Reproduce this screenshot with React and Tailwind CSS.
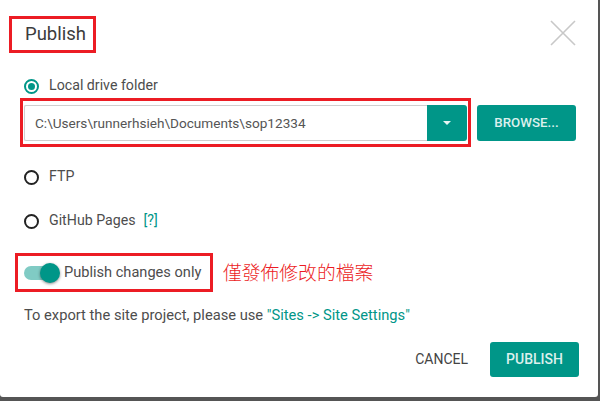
import React from "react";

function Radio({ checked, label, children }) {
  return (
    <div className="flex items-center h-[20px] pl-[24px]">
      {checked ? (
        <span className="w-[15px] h-[15px] rounded-full border-2 border-[#009688] flex items-center justify-center">
          <span className="w-[7px] h-[7px] rounded-full bg-[#009688]" />
        </span>
      ) : (
        <span className="w-[15px] h-[15px] rounded-full border-2 border-[#222]" />
      )}
      <span className="ml-[10px] text-[14.2px] text-[#4d4d4d]">{label}</span>
      {children}
    </div>
  );
}

export default function App() {
  return (
    <div className="w-[600px] h-[401px] bg-[#555] font-['Roboto',sans-serif] overflow-hidden">
      <div className="w-[598px] h-[397px] bg-white rounded-b-[3px] flex flex-col">
        {/* header */}
        <div className="flex justify-between items-start mt-[16px] pl-[9px] pr-[22px]">
          <div className="h-[37px] border-[3px] border-[#ec1c24] pl-[13px] pr-[7px] flex items-center text-[18.5px] text-[#3c3c3c]">
            Publish
          </div>
          <svg width="26" height="26" viewBox="0 0 26 26" className="mt-[4px]">
            <path d="M1 1 L25 25 M25 1 L1 25" stroke="#c8c8c8" strokeWidth="1.6" fill="none" />
          </svg>
        </div>

        <div className="mt-[23px]">
          <Radio checked label="Local drive folder" />
        </div>

        {/* folder input */}
        <div className="flex items-center ml-[20px] mt-[2px]">
          <div className="h-[49px] w-[451px] border-[3px] border-[#ec1c24] px-[1px] pt-[4px] pb-[3px] flex">
            <div className="flex-1 h-[36px] border border-[#cfcfcf] border-r-0 rounded-l-[2px] flex items-center pl-[10px] text-[13.6px] text-[#555]">
              C:\Users\runnerhsieh\Documents\sop12334
            </div>
            <div className="w-[40px] h-[36px] bg-[#009688] rounded-r-[3px] flex items-center justify-center">
              <svg width="8" height="4" viewBox="0 0 8 4">
                <path d="M0 0 L8 0 L4 4 Z" fill="#e8f5f3" />
              </svg>
            </div>
          </div>
          <button className="ml-[6px] h-[36px] w-[99px] bg-[#009688] rounded-[3px] text-[13.3px] font-medium text-[#dcf0ed]">
            BROWSE...
          </button>
        </div>

        <div className="mt-[20px]">
          <Radio label="FTP" />
        </div>
        <div className="mt-[24px]">
          <Radio label="GitHub Pages">
            <span className="ml-[8px] text-[14.2px] text-[#009688]">[?]</span>
          </Radio>
        </div>

        {/* toggle */}
        <div className="flex items-center ml-[15px] mt-[22px]">
          <div className="h-[39px] w-[198px] border-[3px] border-[#ec1c24] pl-[6px] flex items-center">
            <div className="relative w-[35px] h-[14px] rounded-full bg-[#80cbc4]">
              <span className="absolute right-[-1px] top-[-3px] w-[20px] h-[20px] rounded-full bg-[#009688] shadow-[0_1px_3px_rgba(0,0,0,0.45)]" />
            </div>
            <span className="ml-[5px] text-[14.6px] text-[#4d4d4d]">Publish changes only</span>
          </div>
          <span className="ml-[10px] text-[18.8px] text-[#ec1c24] font-['Noto_Sans_CJK_TC',sans-serif] font-light leading-none">
            僅發佈修改的檔案
          </span>
        </div>

        <div className="mt-[13px] h-[20px] flex items-center pl-[24px] text-[14.7px] text-[#4d4d4d] whitespace-nowrap">
          To export the site project, please use&nbsp;
          <span className="text-[#009688]">"Sites -&gt; Site Settings"</span>
        </div>

        {/* footer */}
        <div className="mt-[17px] flex items-center justify-end pr-[19px]">
          <button className="text-[14px] text-[#444] mr-[22px]">CANCEL</button>
          <button className="h-[35px] w-[89px] bg-[#009688] rounded-[3px] text-[14px] font-medium text-[#dcf0ed]">
            PUBLISH
          </button>
        </div>
      </div>
    </div>
  );
}
